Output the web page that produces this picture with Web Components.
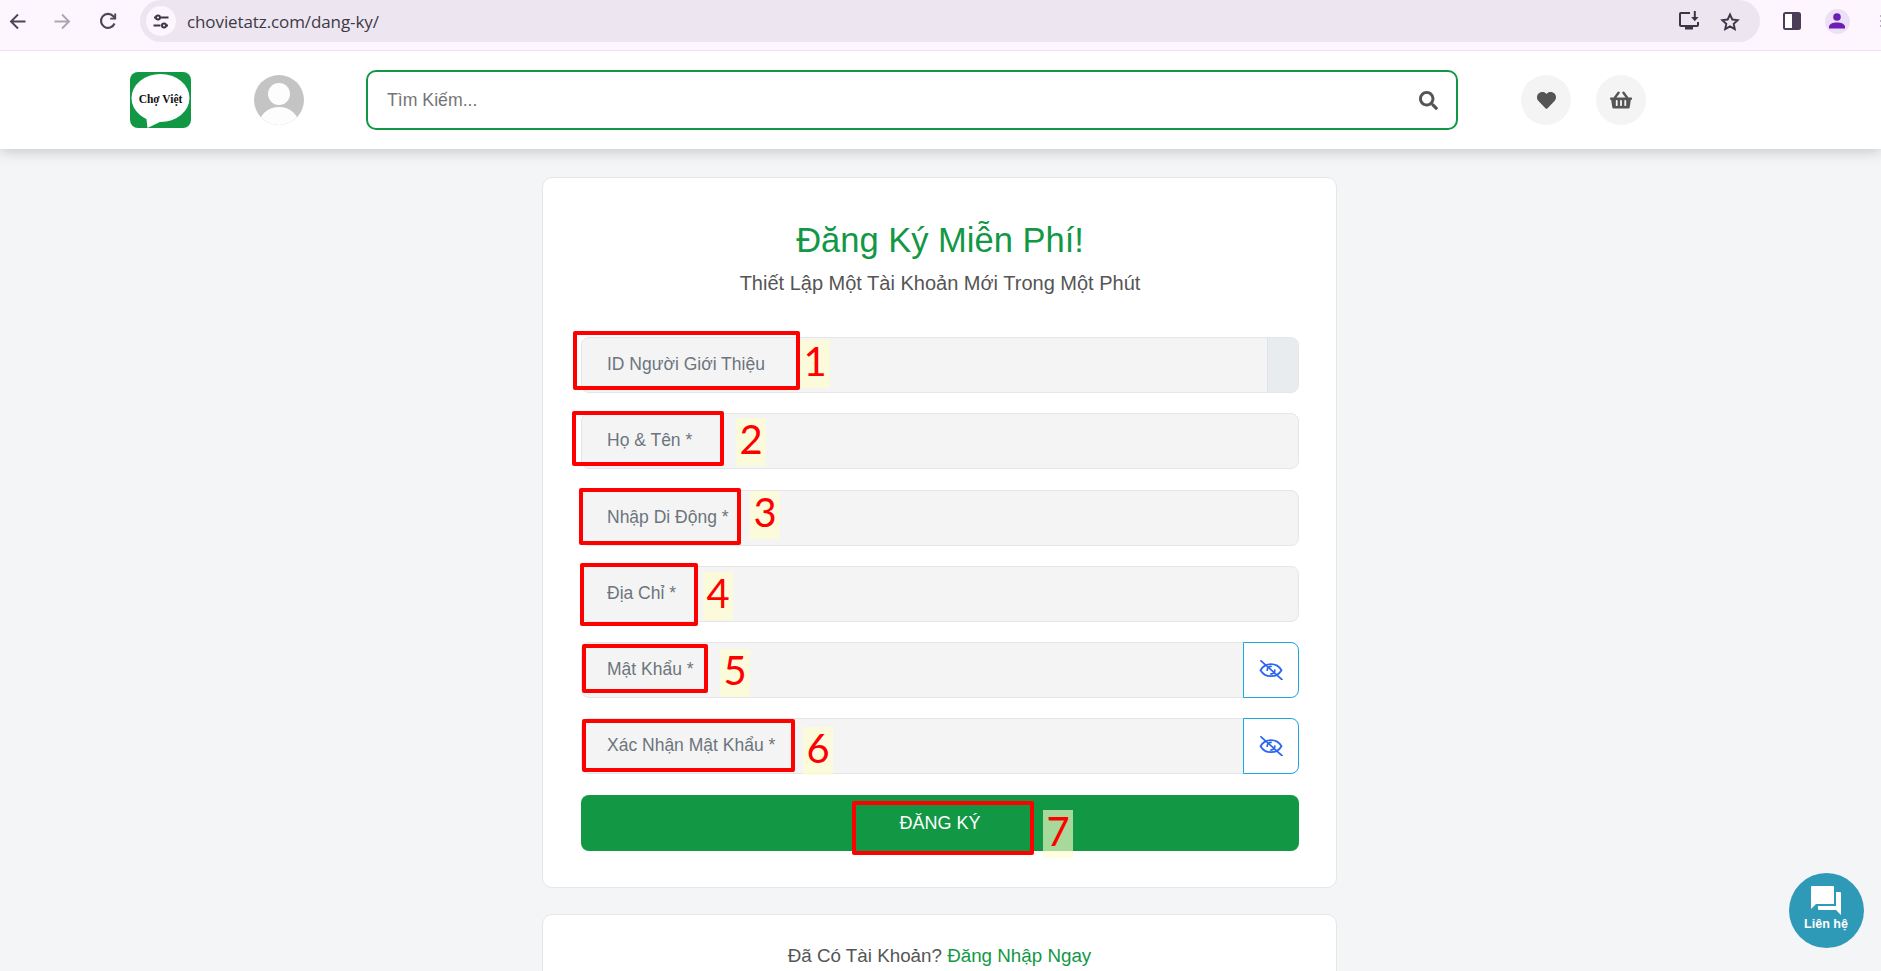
<!DOCTYPE html>
<html lang="vi"><head><meta charset="utf-8"><title>Đăng Ký</title>
<style>
html,body{margin:0;height:971px;overflow:hidden;background:#f4f5f7;font-family:"Liberation Sans",Arial,sans-serif}
</style></head><body>
<browser-bar url="chovietatz.com/dang-ky/"></browser-bar>
<site-header></site-header>
<reg-card>
  <h-title slot="head">Đăng Ký Miễn Phí!</h-title>
  <h-sub slot="head">Thiết Lập Một Tài Khoản Mới Trong Một Phút</h-sub>
  <reg-field addon="plain">ID Người Giới Thiệu</reg-field>
  <reg-field>Họ &amp; Tên *</reg-field>
  <reg-field>Nhập Di Động *</reg-field>
  <reg-field>Địa Chỉ *</reg-field>
  <reg-field addon="eye">Mật Khẩu *</reg-field>
  <reg-field addon="eye">Xác Nhận Mật Khẩu *</reg-field>
  <reg-button>ĐĂNG KÝ</reg-button>
</reg-card>
<login-card>Đã Có Tài Khoản? <a slot="link">Đăng Nhập Ngay</a></login-card>
<contact-fab>Liên hệ</contact-fab>
<note-box x="573" y="331" w="227" h="59"></note-box>
<note-box x="572" y="411" w="152" h="55"></note-box>
<note-box x="579" y="488" w="162" h="57"></note-box>
<note-box x="580" y="563" w="118" h="63"></note-box>
<note-box x="582" y="644" w="126" h="49"></note-box>
<note-box x="582" y="719" w="213" h="53"></note-box>
<note-box x="852" y="801" w="182" h="54"></note-box>
<note-num x="800" y="340">1</note-num>
<note-num x="736" y="418">2</note-num>
<note-num x="750" y="491">3</note-num>
<note-num x="703" y="572">4</note-num>
<note-num x="720" y="649">5</note-num>
<note-num x="803" y="727">6</note-num>
<note-num x="1043" y="810">7</note-num>
<script>
const def=(n,html,init)=>customElements.define(n,class extends HTMLElement{
  constructor(){super();this.attachShadow({mode:'open'}).innerHTML=typeof html==='function'?html(this):html;}
  connectedCallback(){if(init)init(this);}
});
const I={
 heart:'<svg viewBox="0 0 512 512" width="19" height="19" fill="#555"><path d="M462.3 62.6C407.5 15.9 326 8.3 275.7 60.2L256 80.8l-19.7-20.6C186.1 8.3 104.5 15.9 49.7 62.6c-62.8 53.6-66.1 149.8-9.9 207.9l193.5 199.8c12.5 12.9 32.8 12.9 45.3 0l193.5-199.8c56.3-58.1 53-154.3-9.8-207.9z"/></svg>',
 basket:'<svg viewBox="0 0 576 512" width="22" height="20" fill="#555"><path d="M576 216v16c0 13.255-10.745 24-24 24h-8l-26.113 182.788C514.509 462.435 494.257 480 470.37 480H105.63c-23.887 0-44.139-17.565-47.518-41.212L32 256h-8c-13.255 0-24-10.745-24-24v-16c0-13.255 10.745-24 24-24h67.341l106.78-146.821c10.395-14.292 30.407-17.453 44.701-7.058 14.293 10.395 17.453 30.408 7.058 44.701L170.477 192h235.046L326.12 82.821c-10.395-14.292-7.234-34.306 7.059-44.701 14.291-10.395 34.306-7.235 44.701 7.058L484.659 192H552c13.255 0 24 10.745 24 24zM312 392V280c0-13.255-10.745-24-24-24s-24 10.745-24 24v112c0 13.255 10.745 24 24 24s24-10.745 24-24zm112 0V280c0-13.255-10.745-24-24-24s-24 10.745-24 24v112c0 13.255 10.745 24 24 24s24-10.745 24-24zm-224 0V280c0-13.255-10.745-24-24-24s-24 10.745-24 24v112c0 13.255 10.745 24 24 24s24-10.745 24-24z"/></svg>',
 search:'<svg viewBox="0 0 512 512" width="19" height="19" fill="#555"><path d="M505 442.7L405.3 343c-4.5-4.5-10.6-7-17-7H372c27.6-35.3 44-79.7 44-128C416 93.1 322.9 0 208 0S0 93.1 0 208s93.1 208 208 208c48.3 0 92.7-16.4 128-44v16.3c0 6.4 2.5 12.5 7 17l99.7 99.7c9.4 9.4 24.6 9.4 33.9 0l28.3-28.3c9.4-9.4 9.4-24.6.1-34zM208 336c-70.7 0-128-57.2-128-128 0-70.7 57.2-128 128-128 70.7 0 128 57.2 128 128 0 70.7-57.2 128-128 128z"/></svg>',
 eye:'<svg viewBox="0 0 24 20" width="24" height="20" fill="none" stroke="#2d66f0" stroke-width="1.8" stroke-linecap="round"><path d="M1.500 10.200C4 6 8 4.200 12 4.200S20 6 22.500 10.200C20 14.400 16 16.200 12 16.200S4 14.400 1.500 10.200Z"/><path d="M8.200 10.200a3.800 3.800 0 0 1 3.800-3.800M15.800 10.200a3.800 3.800 0 0 1-3.800 3.800"/><path d="M2 .8 23 19.600" stroke-width="1.800"/></svg>'
};
def('browser-bar',h=>`<style>
:host{display:flex;align-items:flex-start;height:50px;background:#fdf6fe;border-bottom:1px solid #ebe0f0;position:relative;z-index:3}
.nav{display:flex;width:140px;height:42px;align-items:center}
.nav svg{display:block;flex:none}
.pill{flex:1;height:42px;background:#ede6f1;border-radius:0 21px 21px 21px;display:flex;align-items:center;padding:0 9.500px 0 6px;border-top-left-radius:21px}
.tune{width:30px;height:30px;border-radius:50%;background:#fdf6fe;display:grid;place-items:center;flex:none}
.url{margin-left:11px;font:17px "Open Sans","Noto Sans",sans-serif;color:#3d3a45;flex:1;letter-spacing:-.1px}
.ico{display:grid;place-items:center;width:41px;height:42px}
.right{display:flex;align-items:center;height:42px;width:121px}
.prof{width:25px;height:25px;border-radius:50%;background:#ecdff7;display:grid;place-items:center;margin-left:22.500px}
.slot{width:20px;display:grid;place-items:center;margin-left:22px}
.dots{margin-left:auto;width:1px;height:12px;background:repeating-linear-gradient(#b9b4bd 0 2px,transparent 2px 5px)}
</style>
<div class="nav">
<svg style="margin-left:8px" width="20" height="20" viewBox="0 0 20 20" fill="none" stroke="#4b4556" stroke-width="1.9"><path d="M17.500 10.500H3.500M10 3.500 3 10.500l7 7"/></svg>
<svg style="margin-left:24px" width="20" height="20" viewBox="0 0 20 20" fill="none" stroke="#aba6b0" stroke-width="1.9"><path d="M2.500 10.500h14M10 3.500l7 7-7 7"/></svg>
<svg style="margin-left:26px" width="20" height="20" viewBox="0 0 20 20" fill="none" stroke="#4b4556" stroke-width="2.100"><path d="M16.500 12.500A7 7 0 1 1 15.300 5.300L17 7"/><path d="M17.200 2.600v5h-5" stroke-width="1.900"/></svg>
</div>
<div class="pill"><span class="tune"><svg width="16" height="15" viewBox="0 0 16 15" fill="none" stroke="#3b3746" stroke-width="2"><path d="M1 3.500h1.500M8 3.500h7.500M.5 11.500h7M13.500 11.500H15"/><circle cx="5" cy="3.500" r="2"/><circle cx="11" cy="11.500" r="2"/></svg></span>
<span class="url">${h.getAttribute('url')}</span>
<span class="ico"><svg width="22" height="20" viewBox="0 0 22 20" fill="#3b3746"><path d="M2.800 1h9.200v2H3v11h16v-3h2v3a2 2 0 0 1-2 2h-4v2.600H7V16H3a2 2 0 0 1-2-2V3a2 2 0 0 1 1.800-2Z"/><path d="M15.800 0h2v6h2.700l-3.700 4.200L13.100 6h2.700Z"/></svg></span>
<span class="ico"><svg width="20" height="19" viewBox="0 0 20 19" fill="none" stroke="#3b3746" stroke-width="1.900"><path d="m10 2.500 2.300 5 5.400.600-4 3.700 1.100 5.300L10 14.400l-4.800 2.700 1.100-5.300-4-3.700 5.400-.600Z"/></svg></span>
</div>
<div class="right"><span class="slot"><svg width="18" height="18" viewBox="0 0 18 18"><rect x="1" y="1" width="16" height="16" rx="1.500" fill="#fff" stroke="#4b3f58" stroke-width="2"/><rect x="9" y="1" width="8" height="16" fill="#4b3f58"/></svg></span>
<span class="prof"><svg width="16" height="16" viewBox="0 0 16 16" fill="#6a1fb0"><circle cx="8" cy="4" r="3.800"/><path d="M0 15.500v-1.700C0 11 4 9.500 8 9.500s8 1.500 8 4.300v1.700Z"/></svg></span><span class="dots"></span></div>`);
def('site-header',`<style>
:host{display:flex;align-items:center;height:98px;background:#fff;box-shadow:0 2px 14px rgba(0,0,0,.2);position:relative;z-index:2;padding-left:130px;box-sizing:border-box}
.logo{width:61px;height:56px;display:grid;flex:none}
.logo>*{grid-area:1/1}
.logo span{place-self:center;font:700 11.500px "Liberation Serif",serif;color:#111;position:relative;top:-1px}
.av{margin-left:63px;flex:none;display:block}
.search{margin-left:62px;width:1092px;height:60px;box-sizing:border-box;border:2px solid #129845;border-radius:10px;display:flex;align-items:center;justify-content:space-between;padding:0 18px 0 19px;font-size:17.700px;color:#757575}
.round{width:50px;height:50px;border-radius:50%;background:#f4f4f4;display:grid;place-items:center;flex:none}
</style>
<div class="logo"><svg width="61" height="56" viewBox="0 0 61 56"><rect width="61" height="56" rx="8" fill="#129845"/><ellipse cx="30.500" cy="26" rx="29" ry="24" fill="#fff"/><path d="M16 43l1.500 13L32 49Z" fill="#fff"/></svg><span>Chợ Việt</span></div>
<svg class="av" width="50" height="50" viewBox="0 0 50 50"><defs><clipPath id="c"><circle cx="25" cy="25" r="25"/></clipPath></defs><circle cx="25" cy="25" r="25" fill="#c4c4c4"/><g clip-path="url(#c)" fill="#fdfdfd"><circle cx="25" cy="19" r="11"/><ellipse cx="25" cy="50" rx="20" ry="18"/></g></svg>
<div class="search"><span>Tìm Kiếm...</span><span style="display:grid">${I.search}</span></div>
<div class="round" style="margin-left:63px">${I.heart}</div>
<div class="round" style="margin-left:25px">${I.basket}</div>`);
def('h-title',`<style>:host{display:block;text-align:center;font-size:34.500px;line-height:44px;color:#129845}</style><slot></slot>`);
def('h-sub',`<style>:host{display:block;text-align:center;font-size:20px;line-height:26px;color:#555;margin-top:8px}</style><slot></slot>`);
def('reg-card',`<style>
:host{display:block;box-sizing:border-box;width:795px;margin:28px 0 0 542px;background:#fff;border:1px solid #e6e6e6;border-radius:10px;padding:40px 37px 36px 38px}
.form{display:flex;flex-direction:column;gap:20.300px;margin-top:41px}
</style><slot name="head"></slot><div class="form"><slot></slot></div>`);
def('reg-field',h=>{const a=h.getAttribute('addon');return `<style>
:host{display:flex;height:56px;box-sizing:border-box;background:#f4f4f4;border:1px solid #e6e6e6;border-radius:8px;font-size:17.500px;color:#6c757d}
.t{flex:1;display:flex;align-items:center;padding:0 0 1px 25px}
.plain{width:30px;background:#e9ecef;border-left:1px solid #dfe3e7;border-radius:0 7px 7px 0}
.eye{width:56px;background:#fff;border:1px solid #1ba8e0;border-radius:0 8px 8px 0;margin:-1px;display:grid;place-items:center;box-sizing:border-box}
</style><div class="t"><slot></slot></div>${a==='plain'?'<div class="plain"></div>':a==='eye'?`<div class="eye">${I.eye}</div>`:''}`});
def('reg-button',`<style>:host{display:flex;align-items:center;justify-content:center;box-sizing:border-box;height:56px;padding-top:1px;background:#129845;border-radius:8px;color:#fff;font-size:18px}</style><span><slot></slot></span>`);
def('login-card',`<style>:host{display:block;box-sizing:border-box;width:795px;margin:26.500px 0 0 542px;height:80px;background:#fff;border:1px solid #e6e6e6;border-radius:10px;padding-top:28px;text-align:center;font-size:18.800px;line-height:26px;color:#555}
::slotted(a){color:#129845}</style><slot></slot><slot name="link"></slot>`);
def('contact-fab',`<style>:host{position:fixed;left:1788.500px;top:872.500px;width:75px;height:75px;border-radius:50%;background:#2f99b8;display:flex;flex-direction:column;align-items:center;color:#fff;font-weight:700;font-size:12.500px;line-height:14px}
svg{margin-top:12px;display:block}span{margin-top:0}</style>
<svg width="32" height="32" viewBox="0 0 32 32" fill="#fff"><path d="M2 1h21a1 1 0 0 1 1 1v17H6l-5 5V2a1 1 0 0 1 1-1Z"/><path d="M26 7h4a1 1 0 0 1 1 1v22l-5-5H9a1 1 0 0 1-1-1v-3h18Z"/></svg><span><slot></slot></span>`);
def('note-box',`<style>:host{position:absolute;box-sizing:border-box;border:4px solid #fe0000;border-radius:2px;z-index:5}</style>`,e=>{const g=k=>e.getAttribute(k)+'px';e.style.left=g('x');e.style.top=g('y');e.style.width=g('w');e.style.height=g('h');});
def('note-num',`<style>:host{position:absolute;width:30px;height:48px;background:rgba(255,255,205,.63);color:#fe0000;font:40px/42px Lato,"Noto Sans",sans-serif;text-align:center;z-index:5}</style><slot></slot>`,e=>{e.style.left=e.getAttribute('x')+'px';e.style.top=e.getAttribute('y')+'px';});
</script>
</body></html>
